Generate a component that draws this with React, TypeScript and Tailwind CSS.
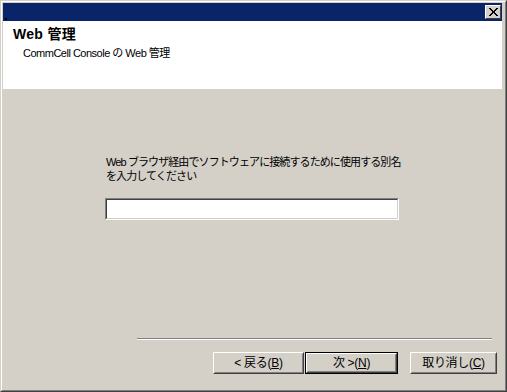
import React from 'react';

const ui = { fontFamily: '"Liberation Sans", "Noto Sans CJK JP", sans-serif' };

const Btn: React.FC<{ w: string; def?: boolean; children: React.ReactNode }> = ({ w, def, children }) => {
  const bevel = (
    <div className="h-full border border-t-white border-l-white border-r-[#404040] border-b-[#404040]">
      <div className="h-full flex items-center justify-center border border-t-[#d4d0c8] border-l-[#d4d0c8] border-r-[#808080] border-b-[#808080] text-[12px] tracking-[-0.3px] text-black">
        {children}
      </div>
    </div>
  );
  if (def) {
    return <div className={`${w} h-[22px] border border-black`}>{bevel}</div>;
  }
  return <div className={`${w} h-[22px]`}>{bevel}</div>;
};

export default function App() {
  return (
    <div
      style={ui}
      className="w-[507px] h-[392px] bg-[#d4d0c8] border border-t-[#d4d0c8] border-l-[#d4d0c8] border-r-[#404040] border-b-[#404040]"
    >
      <div className="h-full border border-t-white border-l-white border-r-[#808080] border-b-[#808080] pl-px pt-px pb-px pr-[3px] flex flex-col">
        {/* title bar */}
        <div className="h-[18px] bg-[#0a246a] flex items-start justify-end relative">
          <div className="absolute left-[2px] bottom-[1px] w-[2px] h-[2px] bg-black" />
          <div className="mt-[2px] mr-[1px] w-[16px] h-[14px] bg-[#d4d0c8] border border-t-white border-l-white border-r-[#404040] border-b-[#404040] flex items-center justify-center">
            <svg width="9" height="8" viewBox="0 0 9 8" shapeRendering="crispEdges">
              <path d="M0 0h2l2.5 3L7 0h2L5.5 4 9 8H7L4.5 5 2 8H0l3.5-4z" fill="#000" />
            </svg>
          </div>
        </div>

        {/* header */}
        <div className="h-[68px] bg-white pt-[5px]">
          <div className="pl-[10px] text-[14px] leading-[16px] font-bold tracking-[0.3px] text-black">Web 管理</div>
          <div className="pl-[20px] mt-[4px] text-[11px] leading-[14px] tracking-[-0.5px] text-black">CommCell Console の Web 管理</div>
        </div>

        {/* body */}
        <div className="flex-1 flex flex-col">
          <div className="pl-[103px] pt-[66px]">
            <div className="text-[11px] leading-[14px] tracking-[-0.9px] text-black">
              <div>Web ブラウザ経由でソフトウェアに接続するために使用する別名</div>
              <div>を入力してください</div>
            </div>
            <div className="mt-[15px] -ml-px w-[294px] h-[22px] border border-t-[#808080] border-l-[#808080] border-r-white border-b-white">
              <div className="h-full bg-white border border-t-[#404040] border-l-[#404040] border-r-[#d4d0c8] border-b-[#d4d0c8]" />
            </div>
          </div>

          <div className="flex-1" />

          <div className="ml-[134px] w-[355px] border-t border-t-[#808080] border-b border-b-white" />

          <div className="mt-[12px] mb-[15px] flex pl-[210px]">
            <Btn w="w-[91px]">
              &lt; 戻る(<span className="underline">B</span>)
            </Btn>
            <div className="ml-[1px]">
              <Btn w="w-[93px]" def>
                次 &gt;(<span className="underline">N</span>)
              </Btn>
            </div>
            <div className="ml-[12px]">
              <Btn w="w-[87px]">
                取り消し(<span className="underline">C</span>)
              </Btn>
            </div>
          </div>
        </div>
      </div>
    </div>
  );
}
